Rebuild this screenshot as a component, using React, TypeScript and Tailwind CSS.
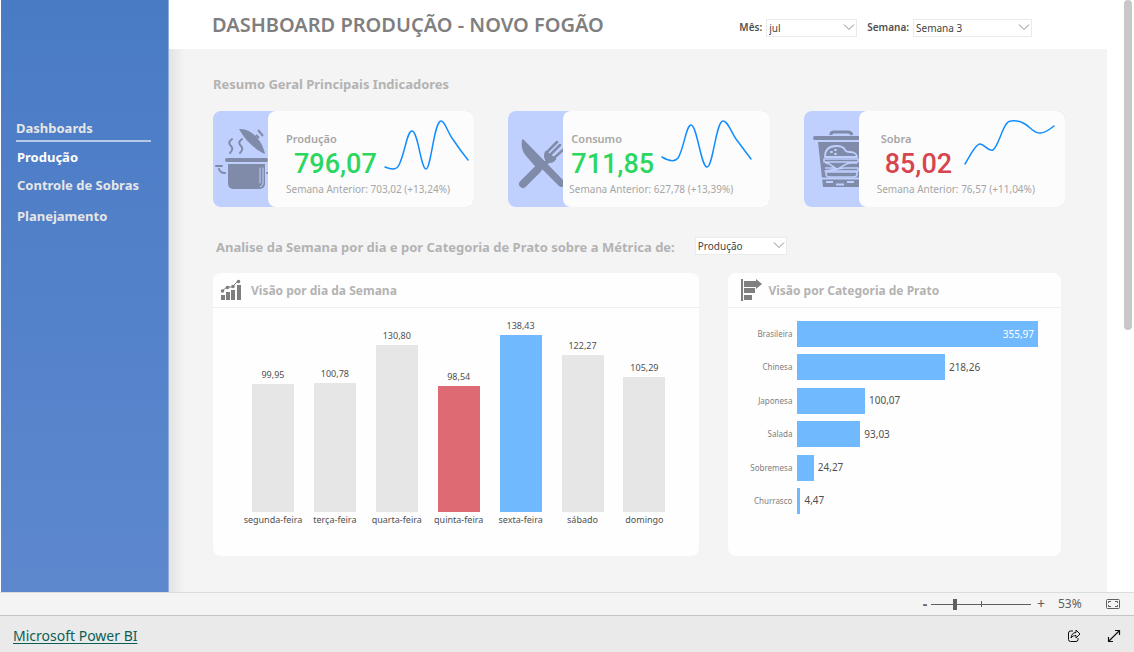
import type { ReactNode } from "react";
import clsx from "clsx";

const NAV_ITEMS = [
  { label: "Produção", active: true, className: "mt-[5px]" },
  { label: "Controle de Sobras", active: false, className: "mt-2" },
  { label: "Planejamento", active: false, className: "mt-[11px]" },
];

const WEEK_DAYS = [
  { day: "segunda-feira", value: 99.95, color: "bg-[#e6e6e6]" },
  { day: "terça-feira", value: 100.78, color: "bg-[#e6e6e6]" },
  { day: "quarta-feira", value: 130.8, color: "bg-[#e6e6e6]" },
  { day: "quinta-feira", value: 98.54, color: "bg-[#de6a73]" },
  { day: "sexta-feira", value: 138.43, color: "bg-[#70b9ff]" },
  { day: "sábado", value: 122.27, color: "bg-[#e6e6e6]" },
  { day: "domingo", value: 105.29, color: "bg-[#e6e6e6]" },
];

const CATEGORIES = [
  { name: "Brasileira", value: 355.97 },
  { name: "Chinesa", value: 218.26 },
  { name: "Japonesa", value: 100.07 },
  { name: "Salada", value: 93.03 },
  { name: "Sobremesa", value: 24.27 },
  { name: "Churrasco", value: 4.47 },
];

const formatValue = (value: number) => value.toFixed(2).replace(".", ",");

function PotIcon() {
  return (
    <svg className="h-24 w-14" viewBox="0 0 56 96" fill="none" stroke="#7f8ba8" strokeWidth="2" strokeLinecap="round">
      <path d="M19 28c-4 3-3 5-1 7s2 4-1 7M29 28c-4 3-3 5-1 7s2 4-1 7" />
      <path d="M26 18c12-1 23 11 26 25-11-5-20-14-26-25Z" fill="#7f8ba8" stroke="none" />
      <path d="M43 24l3 3M45 19l5 6" strokeLinecap="butt" />
      <rect x="12" y="47" width="43" height="4" rx="2" fill="#7f8ba8" stroke="none" />
      <path d="M15 53h37v20a5 5 0 0 1-5 5H20a5 5 0 0 1-5-5Z" fill="#7f8ba8" stroke="none" />
      <path d="M50 57v15q0 3-3 4M47 57v15" stroke="#c0d0fe" strokeWidth="1" />
      <path d="M3 55h6M6 58q1 4 6 4M54 62h2" />
    </svg>
  );
}

function CutleryIcon() {
  return (
    <svg className="h-24 w-14" viewBox="0 0 56 96" fill="none" stroke="#7f8ba8">
      <path d="M15 73 29 59" strokeWidth="8" strokeLinecap="round" />
      <path d="m30 60 11-11" strokeWidth="4" />
      <path d="M39 41 49 31M42 44 52 34M46 47 57 37" strokeWidth="2.500" strokeLinecap="round" />
      <path d="M38 40c-3 4-1 10 2 11s6 0 8-3Z" fill="#7f8ba8" strokeLinejoin="round" />
      <path
        d="M14 29c-1 6 0 12 5 17l12 14 3-2 17 17c3 3 8-1 5-5L16 29c-1-1-2-1-2 0Z"
        fill="#7f8ba8"
        stroke="none"
      />
    </svg>
  );
}

function WasteIcon() {
  return (
    <svg className="h-24 w-14" viewBox="0 0 56 96" fill="none" stroke="#c0d0fe" strokeWidth="2" strokeLinejoin="round">
      <path d="M27 24v-1q0-2 3-2h14q3 0 4 3" stroke="#7f8ba8" strokeWidth="3" />
      <rect x="9" y="25" width="50" height="4" rx="2" fill="#7f8ba8" stroke="none" />
      <path d="M14 31h44l-3 45H19Z" fill="#7f8ba8" stroke="none" />
      <path d="M21 46c0-8 5-11 11-11 5 0 8 1 9 4 1 2 3 2 5 2 4 0 7 2 7 5Z" strokeWidth="1.8" />
      <path d="M27 41h1M31 39h1M31 43h1" strokeLinecap="round" />
      <path d="M20 48h34v3H20ZM21 52c5-1 8 5 12 6 5-1 8-6 13-6h7M21 57h11M40 57h14v3H21Z" strokeWidth="1.5" />
      <path d="M22 61h31v2q0 3-4 3H26q-4 0-4-3Z" strokeWidth="1.6" />
      <path d="M17 67.500h38M22 71h7M32 73.500h8M43 71h7" />
    </svg>
  );
}

const KPIS = [
  {
    label: "Produção",
    value: "796,07",
    previous: "Semana Anterior: 703,02 (+13,24%)",
    labelClass: "",
    valueClass: "pl-2 text-[#2bd761]",
    bodyClass: "pl-[18px]",
    icon: <PotIcon />,
    // sparkline is drawn in pixels, width varies with the card
    width: 92,
    line: "M3 48C8 50 14 52 17 46C23 34 25 12 30 12C36 12 39 50 44 50C49 50 52 2 59 2C63 2 65 12 70 19Q78 31 86 41",
  },
  {
    label: "Consumo",
    value: "711,85",
    previous: "Semana Anterior: 627,78 (+13,39%)",
    labelClass: "pl-0.5",
    valueClass: "pl-0.5 text-[#2bd761]",
    bodyClass: "pl-1.5 pr-4",
    icon: <CutleryIcon />,
    width: 95,
    line: "M3 38C8 41 15 44 19 39C25 30 27 6 32 6C38 6 42 48 48 48C54 48 57 2 64 2C69 2 72 13 77 20L92 40",
  },
  {
    label: "Sobra",
    value: "85,02",
    previous: "Semana Anterior: 76,57 (+11,04%)",
    labelClass: "pl-1",
    valueClass: "pl-2 text-[#d64550]",
    bodyClass: "pl-[18px] pr-2",
    icon: <WasteIcon />,
    width: 95,
    line: "M3 45C7 39 13 25 18 25C22 25 27 33 31 31C38 25 41 2 49 2C55 1 58 2 63 5C68 8 72 14 77 14Q82 15 92 7",
  },
];

function KpiCard({ kpi }: { kpi: (typeof KPIS)[number] }) {
  return (
    <article className="flex h-24 overflow-hidden rounded-lg bg-[#c0d0fe]">
      <div className="w-[55px] shrink-0 overflow-hidden">{kpi.icon}</div>
      <div className={clsx("min-w-0 flex-1 rounded-l-lg bg-[#fcfcfc] pt-2", kpi.bodyClass)}>
        <div className="flex h-[60px] justify-between">
          <div className="pt-2.5">
            <h3 className={clsx("text-[11px] leading-5 font-semibold text-[#a6a6a6]", kpi.labelClass)}>
              {kpi.label}
            </h3>
            <p
              className={clsx(
                "font-['Roboto',sans-serif] text-[27px] leading-[30px] font-medium",
                kpi.valueClass
              )}
            >
              {kpi.value}
            </p>
          </div>
          <svg width={kpi.width} height="52" className="shrink-0" fill="none">
            <path d={kpi.line} stroke="#118dff" strokeWidth="1.5" strokeLinecap="round" />
          </svg>
        </div>
        <p className="text-[10px] leading-5 whitespace-nowrap text-[#a6a6a6]">{kpi.previous}</p>
      </div>
    </article>
  );
}

interface DropdownProps {
  id: string;
  options: string[];
  className?: string;
}

function Dropdown({ id, options, className }: DropdownProps) {
  return (
    <div className={clsx("relative", className)}>
      <select
        id={id}
        className="block h-[18px] w-full appearance-none border border-[#eaeaea] bg-white pr-5 pl-0.5 text-[10px] leading-4 font-normal text-[#444]"
      >
        {options.map((option) => (
          <option key={option}>{option}</option>
        ))}
      </select>
      <svg className="pointer-events-none absolute top-1 right-0.5 h-2 w-3" viewBox="0 0 12 8" fill="none">
        <path d="M1 1.500 6 6.500 11 1.500" stroke="#8a8a8a" />
      </svg>
    </div>
  );
}

function TrendIcon() {
  return (
    <svg className="size-6" viewBox="0 0 24 24" fill="#7f7f7f">
      <path d="M2 17h4v5H2zM7 14h4v8H7zM12 12h4v10h-4zM18 7h4v15h-4z" />
      <path d="m3 13 5-4h5l6-6" fill="none" stroke="#7f7f7f" />
      <circle cx="3.500" cy="13" r="1.800" />
      <circle cx="8.500" cy="9.500" r="1.800" />
      <circle cx="14" cy="8.500" r="1.800" />
      <circle cx="19.500" cy="3.500" r="1.800" />
    </svg>
  );
}

function RankIcon() {
  return (
    <svg className="size-6" viewBox="0 0 24 24" fill="#7f7f7f">
      <path d="M1 1h2v22H1zM4 3h12V1l6 5-6 5V9H4zM4 10h11v5H4zM4 17h8v5H4z" />
    </svg>
  );
}

interface PanelProps {
  title: string;
  icon: ReactNode;
  headerClass: string;
  children: ReactNode;
}

function Panel({ title, icon, headerClass, children }: PanelProps) {
  return (
    <section className="min-w-0 rounded-lg bg-[#fefefe] pb-7">
      <header className={clsx("flex h-[35px] items-center border-b border-[#efefef]", headerClass)}>
        {icon}
        <h3 className="pt-0.5 text-xs leading-5 font-bold text-[#b3b3b3]">{title}</h3>
      </header>
      {children}
    </section>
  );
}

function WeekChart() {
  return (
    <div className="grid h-[220px] grid-cols-7 items-end pr-6 pl-[29px]">
      {WEEK_DAYS.map((item) => (
        <div key={item.day} className="flex flex-col items-center text-[9px] leading-4 text-[#505050]">
          <span>{formatValue(item.value)}</span>
          <div
            className={clsx("mt-px w-[42px]", item.color)}
            style={{ height: Math.round(item.value * 1.28) }}
          />
          <span className="whitespace-nowrap">{item.day}</span>
        </div>
      ))}
    </div>
  );
}

function CategoryChart() {
  const max = CATEGORIES[0].value;

  return (
    <ul className="mt-[13px] flex h-[193px] flex-col justify-between pr-[23px]">
      {CATEGORIES.map((item) => {
        const isMax = item.value === max;
        return (
          <li key={item.name} className="flex h-[26px] items-center">
            <span className="w-[69px] shrink-0 pr-[5px] text-right text-[8px] text-[#808080]">{item.name}</span>
            <div className="flex h-full min-w-0 flex-1 items-center text-[10px]">
              <div
                className={clsx("h-full shrink-0 bg-[#70b9ff]", isMax && "flex items-center justify-end pr-1 text-white")}
                style={{ width: `${(item.value / max) * 100}%` }}
              >
                {isMax && formatValue(item.value)}
              </div>
              {!isMax && <span className="pl-1 text-[#505050]">{formatValue(item.value)}</span>}
            </div>
          </li>
        );
      })}
    </ul>
  );
}

function Sidebar() {
  return (
    <aside className="ml-px w-[168px] shrink-0 border-r border-[#8faedd] bg-linear-to-b from-[#497bc5] to-[#5d88ce] pt-[118px] pl-[15px]">
      <h2 className="mr-[17px] border-b-2 border-[#b5c9e8] pb-0.5 text-[13px] leading-5 font-bold text-[#e6e6e6]">
        Dashboards
      </h2>
      <nav className="flex flex-col items-start pl-px">
        {NAV_ITEMS.map((item) => (
          <a
            key={item.label}
            href="#"
            className={clsx(
              "text-[13px] leading-5 font-bold",
              item.className,
              item.active ? "text-white" : "text-[#e6e6e6]"
            )}
          >
            {item.label}
          </a>
        ))}
      </nav>
    </aside>
  );
}

function ZoomBar() {
  return (
    <div className="flex h-6 items-center justify-end border-y border-t-[#dcdcdc] border-b-[#c4c4c4] bg-[#f4f4f4] pr-3.5 text-[#5f5f5f]">
      <button type="button" aria-label="Reduzir zoom" className="w-3 text-center text-sm leading-5 font-bold">
        -
      </button>
      <div className="relative flex h-3 w-[100px] items-center">
        <span className="absolute left-1/2 h-1.5 w-px bg-[#5f5f5f]" />
        <input
          type="range"
          aria-label="Zoom"
          min={0}
          max={100}
          defaultValue={23}
          className="h-px w-full appearance-none bg-[#5f5f5f] [&::-webkit-slider-thumb]:h-[11px] [&::-webkit-slider-thumb]:w-1 [&::-webkit-slider-thumb]:appearance-none [&::-webkit-slider-thumb]:bg-[#5f5f5f]"
        />
      </div>
      <button type="button" aria-label="Ampliar zoom" className="w-5 text-center text-sm leading-5">
        +
      </button>
      <span className="w-[55px] pl-[7px] text-xs">53%</span>
      <button type="button" aria-label="Ajustar à página">
        <svg className="h-3 w-3.5" viewBox="0 0 14 12" fill="none" stroke="#5f5f5f">
          <rect x="0.500" y="1.500" width="13" height="9" rx="1" />
          <path d="M2.500 5V3.500H5M9 3.500h2.500V5M11.500 7v1.500H9M5 8.500H2.500V7" />
        </svg>
      </button>
    </div>
  );
}

export default function App() {
  return (
    <div className="flex min-h-screen flex-col bg-white font-['Noto_Sans','Open_Sans',sans-serif]">
      <div className="flex flex-1">
        <Sidebar />

        <main className="flex min-w-0 flex-1 flex-col">
          <header className="flex h-[49px] shrink-0 items-center pr-[75px] pl-[43px]">
            <h1 className="flex-1 text-xl leading-6 font-semibold whitespace-nowrap text-[#7f7f7f]">
              DASHBOARD PRODUÇÃO - NOVO FOGÃO
            </h1>
            <form className="flex items-center pt-1.5 text-[10px] font-semibold text-[#505050]">
              <label htmlFor="month" className="pr-1">
                Mês:
              </label>
              <Dropdown id="month" options={["jul", "ago", "set"]} className="mr-2.5 w-[91px]" />
              <label htmlFor="week" className="pr-1">
                Semana:
              </label>
              <Dropdown id="week" options={["Semana 3", "Semana 4"]} className="w-[119px]" />
            </form>
          </header>

          <div className="flex flex-1 bg-[#f4f4f4]">
            <div className="w-4 shrink-0 bg-linear-to-r from-[#e3e3e3] to-[#f4f4f4]" />
            <div className="min-w-0 flex-1 pt-[25px] pr-[42px] pb-9 pl-7">
              <h2 className="text-[13px] leading-5 font-bold text-[#b3b3b3]">
                Resumo Geral Principais Indicadores
              </h2>

              <div className="mt-[17px] grid grid-cols-3 gap-[34px]">
                {KPIS.map((kpi) => (
                  <KpiCard key={kpi.label} kpi={kpi} />
                ))}
              </div>

              <div className="mt-[30px] flex h-5 items-start pl-[3px]">
                <label htmlFor="metric" className="pr-5 text-[13px] leading-5 font-bold text-[#b3b3b3]">
                  Analise da Semana por dia e por Categoria de Prato sobre a Métrica de:
                </label>
                <Dropdown id="metric" options={["Produção", "Consumo", "Sobra"]} className="w-[92px]" />
              </div>

              <div className="mt-4 mr-1 grid grid-cols-[487fr_333fr] gap-[29px]">
                <Panel title="Visão por dia da Semana" icon={<TrendIcon />} headerClass="gap-2 pl-1.5">
                  <WeekChart />
                </Panel>
                <Panel title="Visão por Categoria de Prato" icon={<RankIcon />} headerClass="gap-1 pl-3">
                  <CategoryChart />
                </Panel>
              </div>
            </div>
          </div>
        </main>

        <div className="flex w-[27px] shrink-0 justify-end pr-0.5">
          <div className="h-[330px] w-2 rounded-full bg-[#c8c8c8]" />
        </div>
      </div>

      <ZoomBar />

      <footer className="flex h-9 items-center gap-[26px] bg-[#eaeaea] pt-1 pr-[13px] pl-[13px]">
        <a href="#" className="mr-auto text-sm leading-5 text-[#0b5f56] underline underline-offset-2">
          Microsoft Power BI
        </a>
        <button type="button" aria-label="Compartilhar">
          <svg className="size-3.5" viewBox="0 0 14 14" fill="none" stroke="#111" strokeLinejoin="round">
            <path d="M6 2H3.500a2 2 0 0 0-2 2v6.500a2 2 0 0 0 2 2H9a2 2 0 0 0 2-2V9" />
            <path d="M9 1v2.500C6 3.500 4.500 5.500 4 9 5.500 7 7 6.500 9 6.500V9l4-4Z" />
          </svg>
        </button>
        <button type="button" aria-label="Tela cheia">
          <svg className="size-3.5" viewBox="0 0 14 14" fill="none" stroke="#111" strokeWidth="1.200">
            <path d="M1.500 12.500l11-11M8 1.500h4.500V6M1.500 8v4.500H6" />
          </svg>
        </button>
      </footer>
    </div>
  );
}
